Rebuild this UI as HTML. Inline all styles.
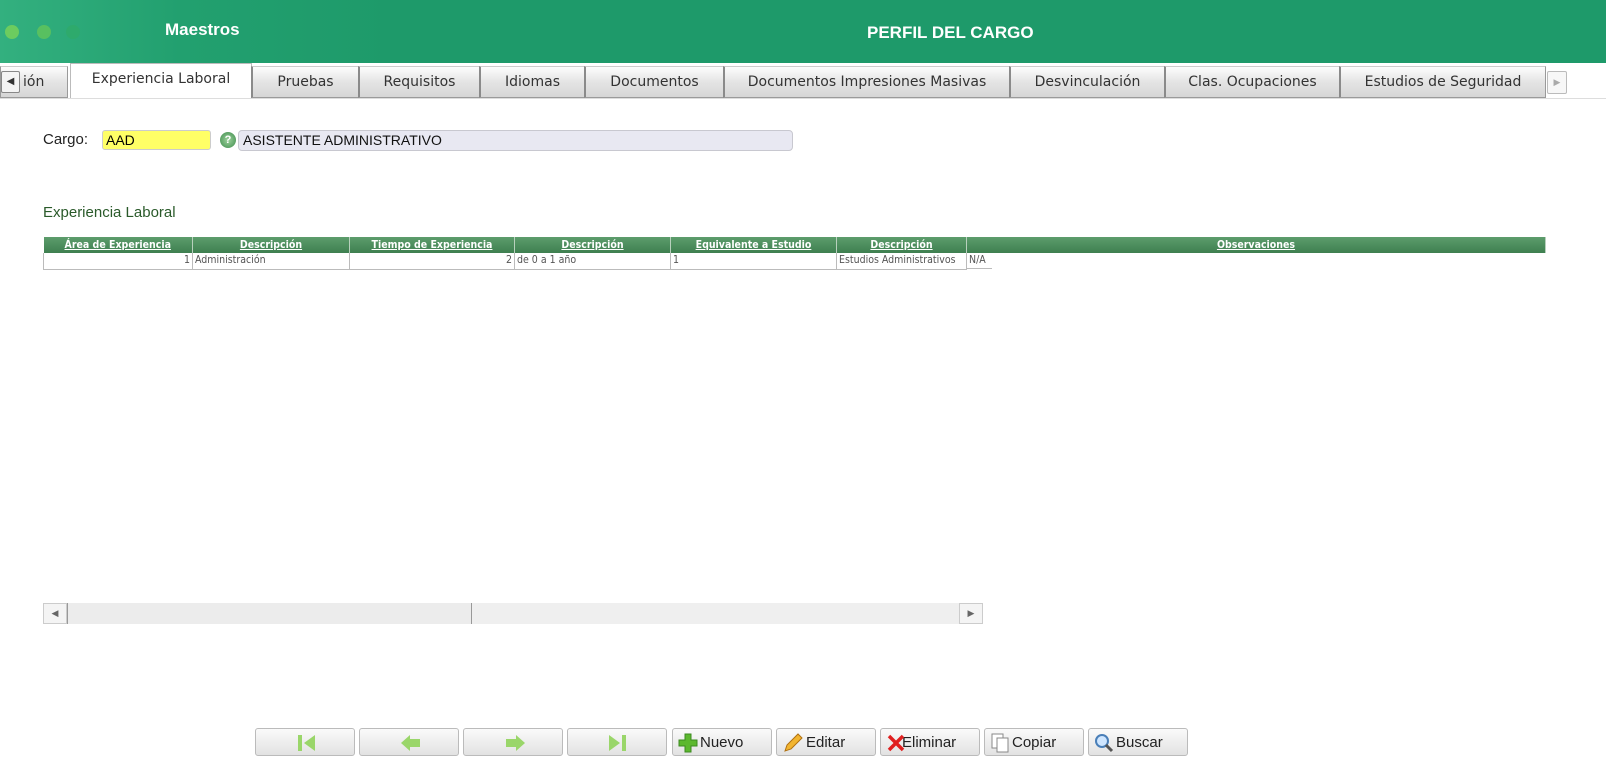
<!DOCTYPE html>
<html><head><meta charset="utf-8"><style>
*{box-sizing:border-box;margin:0;padding:0}
body{width:1606px;height:775px;background:#fff;font-family:"Liberation Sans",sans-serif;position:relative;overflow:hidden}
.hdr{position:absolute;left:0;top:0;width:1606px;height:63px;background:linear-gradient(90deg,#33b07f 0,#22a06f 180px,#1e9a6a 400px,#1e9a6a)}
.dot{position:absolute;top:25px;width:14px;height:14px;border-radius:50%}
.abs{position:absolute}
.tab{position:absolute;top:66px;height:32px;border:1px solid #9a9a9a;border-top-color:#ccc;background:linear-gradient(#fdfdfd,#e4e4e4 50%,#d6d6d6);color:#333;text-align:center;line-height:30px;font-family:"DejaVu Sans","Liberation Sans",sans-serif;font-size:14px;border-left:2px solid #8a8a8a}
.tab.act{top:63px;height:36px;background:#fff;border:1px solid #bbb;border-bottom:none}
table{border-collapse:collapse;font-family:"DejaVu Sans Condensed","DejaVu Sans",sans-serif;font-size:10.5px;table-layout:fixed}
th{background:linear-gradient(#5d9d6c,#3e7f50);color:#fff;text-decoration:underline;height:16px;line-height:16px;font-weight:bold;border-right:1px solid #b8d0bd;padding:0}
td{height:16px;line-height:15px;color:#555;border:1px solid #bbb;border-top:none;padding:0 2px;white-space:nowrap;overflow:hidden}
.btn{position:absolute;top:728px;height:28px;width:100px;border:1px solid #bbb;border-radius:3px;background:linear-gradient(#fafafa,#e2e2e2);font-size:15px;color:#222;line-height:27px}
</style></head><body>
<div class="hdr">
<div class="dot" style="left:5px;background:#6ccc5f"></div>
<div class="dot" style="left:37px;background:#58c060"></div>
<div class="dot" style="left:66px;background:#2eaa6c"></div>
<div class="abs" style="left:165px;top:20px;color:#fff;font-weight:bold;font-size:17px">Maestros</div>
<div class="abs" style="left:867px;top:23px;color:#fff;font-weight:bold;font-size:17px">PERFIL DEL CARGO</div>
</div>
<div class="tab" style="left:0;width:68px;text-align:left;padding-left:22px;border-left:1px solid #999">ión</div>
<div class="abs" style="left:1px;top:71px;width:19px;height:22px;border:1px solid #888;border-radius:2px;background:#f4f4f4;font-size:10px;line-height:20px;text-align:center;color:#333">◀</div>
<div class="tab act" style="left:70px;width:182px">Experiencia Laboral</div>
<div class="tab" style="left:251px;width:108px">Pruebas</div>
<div class="tab" style="left:358px;width:122px">Requisitos</div>
<div class="tab" style="left:479px;width:106px">Idiomas</div>
<div class="tab" style="left:584px;width:140px">Documentos</div>
<div class="tab" style="left:723px;width:287px">Documentos Impresiones Masivas</div>
<div class="tab" style="left:1009px;width:156px">Desvinculación</div>
<div class="tab" style="left:1164px;width:176px">Clas. Ocupaciones</div>
<div class="tab" style="left:1339px;width:207px">Estudios de Seguridad</div>
<div class="abs" style="left:1547px;top:71px;width:20px;height:23px;border:1px solid #bbb;border-radius:2px;background:#f7f7f7;font-size:9px;line-height:21px;text-align:center;color:#aaa">▶</div>
<div class="abs" style="left:0;top:98px;width:1606px;height:1px;background:#ddd"></div>

<div class="abs" style="left:43px;top:131px;font-size:15px;color:#222">Cargo:</div>
<div class="abs" style="left:102px;top:130px;width:109px;height:20px;background:#ffff66;border:1px solid #ccc;border-radius:3px;font-size:14px;padding-left:3px;line-height:18px">AAD</div>
<div class="abs" style="left:220px;top:132px;width:16px;height:16px;border-radius:50%;background:radial-gradient(#9ed39e,#3c8a4a);color:#fff;font-size:11px;font-weight:bold;text-align:center;line-height:16px">?</div>
<div class="abs" style="left:238px;top:130px;width:555px;height:21px;background:#e8e8f2;border:1px solid #c8c8d0;border-radius:4px;font-size:14px;padding-left:4px;line-height:19px;color:#111">ASISTENTE ADMINISTRATIVO</div>

<div class="abs" style="left:43px;top:204px;font-size:15px;color:#2a5a2a">Experiencia Laboral</div>

<table class="abs" style="left:43px;top:237px;width:1502px">
<colgroup><col style="width:149px"><col style="width:157px"><col style="width:165px"><col style="width:156px"><col style="width:166px"><col style="width:130px"><col style="width:579px"></colgroup>
<tr><th>Área de Experiencia</th><th>Descripción</th><th>Tiempo de Experiencia</th><th>Descripción</th><th>Equivalente a Estudio</th><th>Descripción</th><th>Observaciones</th></tr>
<tr><td style="text-align:right">1</td><td>Administración</td><td style="text-align:right">2</td><td>de 0 a 1 año</td><td>1</td><td>Estudios Administrativos</td><td style="border:none;padding:0;vertical-align:top"><div style="width:25px;border-bottom:1px solid #bbb;padding-left:2px;height:16px;line-height:15px">N/A</div></td></tr>
</table>

<div class="abs" style="left:43px;top:603px;width:940px;height:21px;background:#efefef"></div>
<div class="abs" style="left:43px;top:603px;width:24px;height:21px;border:1px solid #ccc;background:#f4f4f4;font-size:9px;color:#666;text-align:center;line-height:19px">◀</div>
<div class="abs" style="left:67px;top:603px;width:405px;height:21px;border-left:1px solid #999;border-right:1px solid #999;background:#ececec"></div>
<div class="abs" style="left:959px;top:603px;width:24px;height:21px;border:1px solid #ccc;background:#f4f4f4;font-size:9px;color:#666;text-align:center;line-height:19px">▶</div>

<div class="btn" style="left:255px"><svg style="position:absolute;left:40px;top:5px" width="20" height="18"><rect x="2" y="1" width="4" height="16" fill="#9ad66a"/><path d="M19 1 L8 9 L19 17Z" fill="#9ad66a"/></svg></div>
<div class="btn" style="left:359px"><svg style="position:absolute;left:40px;top:5px" width="22" height="18"><path d="M1 9 L10 1 V5 H20 V13 H10 V17Z" fill="#9ad66a"/></svg></div>
<div class="btn" style="left:463px"><svg style="position:absolute;left:40px;top:5px" width="22" height="18"><path d="M21 9 L12 1 V5 H2 V13 H12 V17Z" fill="#9ad66a"/></svg></div>
<div class="btn" style="left:567px"><svg style="position:absolute;left:40px;top:5px" width="20" height="18"><rect x="14" y="1" width="4" height="16" fill="#9ad66a"/><path d="M1 1 L12 9 L1 17Z" fill="#9ad66a"/></svg></div>
<div class="btn" style="left:672px;padding-left:27px"><svg style="position:absolute;left:5px;top:4px" width="20" height="20"><path d="M7 1H13V7H19V13H13V19H7V13H1V7H7Z" fill="#5cb82e" stroke="#3c8a20"/></svg>Nuevo</div>
<div class="btn" style="left:776px;padding-left:29px"><svg style="position:absolute;left:5px;top:3px" width="22" height="22"><path d="M3 19 L5 13 L16 2 L20 6 L9 17Z" fill="#f2b530" stroke="#b07010"/></svg>Editar</div>
<div class="btn" style="left:880px;padding-left:21px"><svg style="position:absolute;left:6px;top:5px" width="18" height="18"><path d="M2 2 L16 16 M16 2 L2 16" stroke="#e02020" stroke-width="3.5"/></svg>Eliminar</div>
<div class="btn" style="left:984px;padding-left:27px"><svg style="position:absolute;left:6px;top:4px" width="20" height="20"><rect x="1" y="1" width="11" height="14" fill="#fff" stroke="#888"/><rect x="6" y="5" width="11" height="14" fill="#fff" stroke="#888"/></svg>Copiar</div>
<div class="btn" style="left:1088px;padding-left:27px"><svg style="position:absolute;left:5px;top:4px" width="20" height="20"><circle cx="8" cy="8" r="6" fill="#cfe6ff" stroke="#4a7fb8" stroke-width="2"/><path d="M12 12 L18 18" stroke="#555" stroke-width="3"/></svg>Buscar</div>
</body></html>
